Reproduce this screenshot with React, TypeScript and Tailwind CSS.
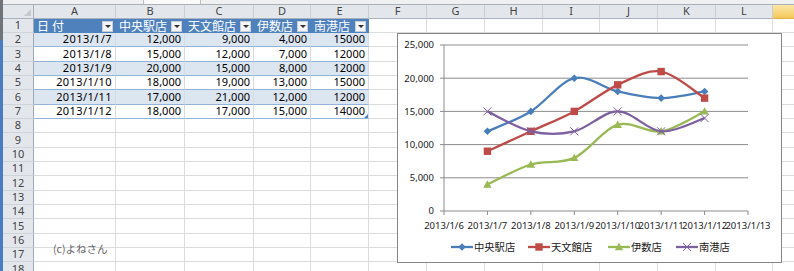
import type { ReactNode } from "react";

const W = [
  "w-[31px]", "w-[82px]", "w-[69px]", "w-[69px]", "w-[57px]", "w-[58px]", "w-[58px]",
  "w-[58px]", "w-[58px]", "w-[57px]", "w-[58px]", "w-[58px]", "w-[57px]", "w-[40px]",
];
const LETTERS = ["A", "B", "C", "D", "E", "F", "G", "H", "I", "J", "K", "L"];

const HEAD = ["日付", "中央駅店", "天文館店", "伊数店", "南港店"];
const DATA = [
  ["2013/1/7", "12,000", "9,000", "4,000", "15000"],
  ["2013/1/8", "15,000", "12,000", "7,000", "12000"],
  ["2013/1/9", "20,000", "15,000", "8,000", "12000"],
  ["2013/1/10", "18,000", "19,000", "13,000", "15000"],
  ["2013/1/11", "17,000", "21,000", "12,000", "12000"],
  ["2013/1/12", "18,000", "17,000", "15,000", "14000"],
];

const SERIES = [
  { name: "中央駅店", color: "#4a7ebb", marker: "diamond", values: [12000, 15000, 20000, 18000, 17000, 18000] },
  { name: "天文館店", color: "#be4b48", marker: "square", values: [9000, 12000, 15000, 19000, 21000, 17000] },
  { name: "伊数店", color: "#98b954", marker: "triangle", values: [4000, 7000, 8000, 13000, 12000, 15000] },
  { name: "南港店", color: "#7d60a0", marker: "x", values: [15000, 12000, 12000, 15000, 12000, 14000] },
];

const font = { fontFamily: '"Noto Sans", "Noto Sans CJK JP", sans-serif' };
const jp = { fontFamily: '"Noto Sans CJK JP", sans-serif' };

// plot area, in chart pixels
const X0 = 46;
const DX = 43.43;
const Y0 = 177;
const SY = 166 / 25000;
const px = (i: number) => X0 + (i + 1) * DX;
const py = (v: number) => Y0 - v * SY;

function smooth(pts: number[][]) {
  let d = `M${pts[0][0]},${pts[0][1]}`;
  for (let i = 0; i < pts.length - 1; i++) {
    const p0 = pts[i - 1] || pts[i];
    const p1 = pts[i];
    const p2 = pts[i + 1];
    const p3 = pts[i + 2] || p2;
    const c1x = p1[0] + (p2[0] - p0[0]) / 6;
    const c1y = p1[1] + (p2[1] - p0[1]) / 6;
    const c2x = p2[0] - (p3[0] - p1[0]) / 6;
    const c2y = p2[1] - (p3[1] - p1[1]) / 6;
    d += ` C${c1x},${c1y} ${c2x},${c2y} ${p2[0]},${p2[1]}`;
  }
  return d;
}

function Marker({ kind, x, y, color }: { kind: string; x: number; y: number; color: string }) {
  if (kind === "diamond") return <polygon points={`${x},${y - 3.8} ${x + 3.8},${y} ${x},${y + 3.8} ${x - 3.8},${y}`} fill={color} />;
  if (kind === "square") return <rect x={x - 3.7} y={y - 3.7} width={7.4} height={7.4} fill={color} />;
  if (kind === "triangle") return <polygon points={`${x},${y - 4.2} ${x + 4.2},${y + 3.2} ${x - 4.2},${y + 3.2}`} fill={color} />;
  return (
    <g stroke={color} strokeWidth={1}>
      <line x1={x - 4} y1={y - 4} x2={x + 4} y2={y + 4} />
      <line x1={x - 4} y1={y + 4} x2={x + 4} y2={y - 4} />
    </g>
  );
}

function Chart() {
  const legendX = [53, 130, 210, 278];
  return (
    <div className="absolute left-[394px] top-[33px] h-[230px] w-[385px] border border-[#868686] bg-white">
      <svg width={385} height={230} className="block" style={font}>
        {[5000, 10000, 15000, 20000, 25000].map((v) => (
          <line key={v} x1={X0} x2={350} y1={py(v)} y2={py(v)} stroke="#8c8c8c" strokeWidth={1} />
        ))}
        <line x1={X0} x2={X0} y1={py(25000)} y2={Y0} stroke="#8c8c8c" />
        <line x1={X0} x2={350} y1={Y0} y2={Y0} stroke="#8c8c8c" />
        {[0, 5000, 10000, 15000, 20000, 25000].map((v) => (
          <g key={v}>
            <line x1={X0 - 4} x2={X0} y1={py(v)} y2={py(v)} stroke="#8c8c8c" />
            <text x={36} y={py(v) + 3.3} textAnchor="end" fontSize={9.5} fill="#1a1a1a">
              {v.toLocaleString("en-US")}
            </text>
          </g>
        ))}
        {[6, 7, 8, 9, 10, 11, 12, 13].map((d, i) => (
          <g key={d}>
            <line x1={X0 + i * DX} x2={X0 + i * DX} y1={Y0} y2={Y0 + 4} stroke="#8c8c8c" />
            <text x={X0 + i * DX} y={194.5} textAnchor="middle" fontSize={9.5} fill="#1a1a1a">
              2013/1/{d}
            </text>
          </g>
        ))}
        {SERIES.map((s) => {
          const pts = s.values.map((v, i) => [px(i), py(v)]);
          return (
            <g key={s.name}>
              <path d={smooth(pts)} fill="none" stroke={s.color} strokeWidth={2.3} strokeLinejoin="round" />
              {pts.map((p, i) => (
                <Marker key={i} kind={s.marker} x={p[0]} y={p[1]} color={s.color} />
              ))}
            </g>
          );
        })}
        {SERIES.map((s, i) => (
          <g key={s.name}>
            <line x1={legendX[i]} x2={legendX[i] + 22} y1={213} y2={213} stroke={s.color} strokeWidth={2.3} />
            <Marker kind={s.marker} x={legendX[i] + 11} y={213} color={s.color} />
            <text x={legendX[i] + 23} y={216.8} fontSize={10.3} fill="#1a1a1a" style={jp}>
              {s.name}
            </text>
          </g>
        ))}
      </svg>
    </div>
  );
}

function Row({ n, children }: { n: number; children: ReactNode }) {
  return (
    <div className={`flex ${n % 3 === 0 ? "h-[15px]" : "h-[14px]"}`}>
      <div className={`${W[0]} flex shrink-0 items-center justify-center border-r border-b border-r-[#9eaabb] border-b-[#cfd4db] bg-[#e3e7ec] text-[11px] text-[#444]`}>
        {n}
      </div>
      {children}
    </div>
  );
}

function Blank({ from }: { from: number }) {
  return (
    <>
      {W.slice(from).map((w, i) => (
        <div key={i} className={`${w} shrink-0 border-r border-b border-[#dadcdd] bg-white`} />
      ))}
    </>
  );
}

export default function App() {
  return (
    <div className="flex h-[271px] w-[794px] overflow-hidden bg-white" style={font}>
      <div className="flex w-[3px] shrink-0 flex-col">
        <div className="h-[40px] bg-[#6f747b]" />
        <div className="flex-1 bg-[#4a7cc0]" />
      </div>
      <div className="relative flex-1 overflow-hidden">
        <div className="flex h-[5px] border-b border-[#aab0b8] bg-[#eef0f2]">
          <div className="ml-[140px] w-[58px] border-x border-[#b8bdc4] bg-[#fafafa]" />
        </div>

        <div className="flex h-[14px]">
          <div className={`${W[0]} flex shrink-0 items-end justify-end border-r border-b border-[#a9b3c0] bg-[#e3e7ec] p-[2px]`}>
            <span className="h-0 w-0 border-t-[7px] border-r-[7px] border-t-transparent border-r-[#c5cad1]" />
          </div>
          {LETTERS.map((l, i) => (
            <div key={l} className={`${W[i + 1]} flex shrink-0 items-center justify-center border-r border-b border-r-[#c9ced5] border-b-[#a9b3c0] bg-[#e3e7ec] text-[11px] text-[#444]`}>
              {l}
            </div>
          ))}
          <div className="w-[40px] shrink-0 border-b border-[#e0b44c] bg-gradient-to-b from-[#fbe8a6] to-[#f6c85a]" />
        </div>

        <Row n={1}>
          {HEAD.map((h, i) => (
            <div key={h} className={`${W[i + 1]} flex shrink-0 items-center justify-between bg-[#4f81bd] px-[3px] text-[12px] text-white`} style={jp}>
              <span className={i === 0 ? "tracking-[3px]" : ""}>{h}</span>
              <span className="flex h-[11px] w-[11px] items-center justify-center border border-[#c7ced8] bg-[#f4f5f7]">
                <span className="h-0 w-0 border-x-[3px] border-t-[3px] border-x-transparent border-t-[#333]" />
              </span>
            </div>
          ))}
          <Blank from={6} />
        </Row>

        {DATA.map((r, ri) => {
          const band = ri % 2 === 0 ? "bg-[#dce6f1]" : "bg-white";
          return (
            <Row key={ri} n={ri + 2}>
              {r.map((c, ci) => (
                <div key={ci} className={`${W[ci + 1]} ${band} relative flex shrink-0 items-center justify-end border-r border-b border-r-[#d5dbe4] border-b-[#95b3d7] pr-[3px] text-[11px] text-black ${ci === 0 ? "tracking-[0.4px]" : ""}`}>
                  {c}
                  {ri === 5 && ci === 4 && (
                    <span className="absolute right-0 bottom-0 h-0 w-0 border-t-[4px] border-r-[4px] border-t-transparent border-r-[#4f81bd]" />
                  )}
                </div>
              ))}
              <Blank from={6} />
            </Row>
          );
        })}

        {[8, 9, 10, 11, 12, 13, 14, 15, 16, 17, 18].map((n) => (
          <Row key={n} n={n}>
            <Blank from={1} />
          </Row>
        ))}

        <div className="absolute left-[50px] top-[241px] text-[10.5px] text-[#666]" style={jp}>
          (c)よねさん
        </div>

        <Chart />
      </div>
    </div>
  );
}
